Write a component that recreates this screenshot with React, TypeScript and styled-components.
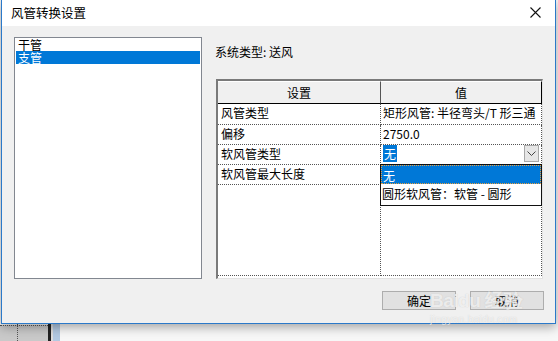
import React from 'react';
import styled, { createGlobalStyle } from 'styled-components';

const GlobalStyle = createGlobalStyle`
  html, body {
    margin: 0;
    padding: 0;
    background: #f4f4f4;
  }
  * {
    box-sizing: border-box;
  }
`;

const Page = styled.div`
  position: relative;
  width: 558px;
  height: 341px;
  overflow: hidden;
  background: #f6f6f6;
  font-family: "Noto Sans CJK SC", "Liberation Sans", sans-serif;
  font-size: 12px;
  color: #000;
`;

const Backdrop = styled.div`
  position: absolute;
  left: 0;
  right: 0;
  bottom: 0;
  height: 24px;
  display: flex;
`;

const BackBlock = styled.div<{ $w: number; $bg: string }>`
  width: ${p => p.$w}px;
  background: ${p => p.$bg};
  flex-shrink: 0;
`;

const DottedBlock = styled.div`
  width: 48px;
  background: #c9c9c9;
  border-top: 1px dotted #555;
  margin-top: 8px;
  position: relative;
  &::after {
    content: '';
    position: absolute;
    left: 17px;
    top: -8px;
    bottom: 0;
    border-left: 1px dotted #555;
  }
`;

const Dialog = styled.div`
  position: relative;
  margin-left: 1px;
  width: 555px;
  height: 324px;
  background: #f0f0f0;
  border: 1px solid #2b79c9;
  border-top: none;
  box-shadow: 0 3px 10px rgba(0, 0, 0, 0.35);
  display: flex;
  flex-direction: column;
  z-index: 1;
`;

const TitleBar = styled.div`
  height: 26px;
  flex-shrink: 0;
  background: #fff;
  display: flex;
  align-items: center;
  justify-content: space-between;
  padding: 0 14px 1px 9px;
  font-size: 12.5px;
`;

const CloseIcon = styled.svg`
  width: 11px;
  height: 11px;
`;

const Body = styled.div`
  display: flex;
  padding: 11px 0 0 12px;
`;

const ListBox = styled.div`
  width: 188px;
  height: 242px;
  background: #fff;
  border: 1px solid #828790;
  padding: 0 1px;
`;

const ListItem = styled.div<{ $selected?: boolean }>`
  height: 13px;
  line-height: 13px;
  font-size: 12px;
  padding-left: 2px;
  background: ${p => (p.$selected ? '#0078d7' : 'transparent')};
  color: ${p => (p.$selected ? '#fff' : '#000')};
  white-space: nowrap;
`;

const RightPanel = styled.div`
  margin-left: 13px;
  display: flex;
  flex-direction: column;
`;

const SystemLabel = styled.div`
  padding-top: 8px;
  line-height: 14px;
  height: 42px;
`;

const Table = styled.div`
  position: relative;
  margin-left: 1px;
  width: 327px;
  height: 200px;
  border-top: 2px solid #7a7a7a;
  border-left: 2px solid #7a7a7a;
  border-right: 1px solid #e3e3e3;
  border-bottom: 1px solid #e3e3e3;
  background: #fff;
  display: grid;
  grid-template-columns: 163px 161px;
  grid-template-rows: 23px 21px 20px 20px 20px 1fr;
`;

const HeaderCell = styled.div<{ $last?: boolean }>`
  background: #f0f0f0;
  border-bottom: 1px solid #000;
  border-right: 1px solid ${p => (p.$last ? '#000' : '#555')};
  border-top: 1px solid #fff;
  display: flex;
  align-items: center;
  justify-content: center;
  font-size: 12px;
`;

const Cell = styled.div<{ $last?: boolean }>`
  position: relative;
  border-bottom: 1px dotted #555;
  border-right: 1px dotted #555;
  padding-left: ${p => (p.$last ? 2 : 3)}px;
  line-height: 18px;
  white-space: nowrap;
  overflow: hidden;
`;

const Filler = styled.div`
  border-right: 1px dotted #555;
  border-bottom: 1px dotted #555;
  margin-bottom: 2px;
`;

const Highlight = styled.span`
  background: #0078d7;
  color: #fff;
  padding: 0 1px;
`;

const ComboButton = styled.div`
  position: absolute;
  right: 2px;
  top: 0;
  width: 15px;
  height: 17px;
  background: #e6e6e6;
  border: 1px solid #a8a8a8;
  display: flex;
  align-items: center;
  justify-content: center;
`;

const DropList = styled.div`
  position: absolute;
  left: 162px;
  top: 83px;
  width: 162px;
  height: 42px;
  background: #fff;
  border: 1px solid #111;
  z-index: 2;
`;

const DropItem = styled.div<{ $selected?: boolean }>`
  height: 19px;
  line-height: 19px;
  padding-left: 1px;
  background: ${p => (p.$selected ? '#0078d7' : '#fff')};
  color: ${p => (p.$selected ? '#fff' : '#000')};
  border: ${p => (p.$selected ? '1px dotted #e8a040' : 'none')};
  white-space: nowrap;
`;

const ButtonRow = styled.div`
  display: flex;
  justify-content: flex-end;
  gap: 14px;
  padding: 12px 11px 0 0;
`;

const Button = styled.div`
  width: 74px;
  height: 19px;
  background: #e1e1e1;
  border: 1px solid #adadad;
  display: flex;
  align-items: center;
  justify-content: center;
  font-size: 12px;
`;

const Watermark = styled.div`
  position: absolute;
  left: 428px;
  top: 291px;
  color: rgba(255, 255, 255, 0.7);
  font-family: "Liberation Sans", sans-serif;
  font-weight: 700;
  font-size: 19px;
  letter-spacing: -0.5px;
  text-shadow: 0 0 1px rgba(150, 150, 150, 0.45);
  z-index: 3;
  line-height: 1;
  white-space: nowrap;
  pointer-events: none;
`;

const WatermarkUrl = styled.div`
  font-size: 10px;
  font-weight: 400;
  letter-spacing: 0.4px;
  margin-top: 5px;
`;

const rows = [
  { name: '风管类型', value: '矩形风管: 半径弯头/T 形三通' },
  { name: '偏移', value: '2750.0' },
  { name: '软风管类型', value: '无', combo: true },
  { name: '软风管最大长度', value: '' },
];

const App: React.FC = () => {
  return (
    <Page>
      <GlobalStyle />
      <Backdrop>
        <DottedBlock />
        <BackBlock $w={3} $bg="#222" />
        <BackBlock $w={2} $bg="#ddd" />
        <BackBlock $w={7} $bg="#b2c9e2" />
        <BackBlock $w={498} $bg="#f7f7f7" />
      </Backdrop>
      <Dialog>
        <TitleBar>
          <span>风管转换设置</span>
          <CloseIcon viewBox="0 0 11 11">
            <path d="M0.5 0.5 L10.5 10.5 M10.5 0.5 L0.5 10.5" stroke="#111" strokeWidth="1.1" />
          </CloseIcon>
        </TitleBar>
        <Body>
          <ListBox>
            <ListItem>干管</ListItem>
            <ListItem $selected>支管</ListItem>
          </ListBox>
          <RightPanel>
            <SystemLabel>系统类型: 送风</SystemLabel>
            <Table>
              <HeaderCell>设置</HeaderCell>
              <HeaderCell $last>值</HeaderCell>
              {rows.map(r => (
                <React.Fragment key={r.name}>
                  <Cell>{r.name}</Cell>
                  <Cell $last>
                    {r.combo ? <Highlight>{r.value}</Highlight> : r.value}
                    {r.combo && (
                      <ComboButton>
                        <svg width="9" height="6" viewBox="0 0 9 6">
                          <path d="M0.5 0.5 L4.5 4.5 L8.5 0.5" fill="none" stroke="#444" strokeWidth="1" />
                        </svg>
                      </ComboButton>
                    )}
                  </Cell>
                </React.Fragment>
              ))}
              <Filler />
              <Filler />
              <DropList>
                <DropItem $selected>无</DropItem>
                <DropItem>圆形软风管：软管 - 圆形</DropItem>
              </DropList>
            </Table>
          </RightPanel>
        </Body>
        <ButtonRow>
          <Button>确定</Button>
          <Button>取消</Button>
        </ButtonRow>
        <Watermark>
          Baidu 经验
          <WatermarkUrl>jingyan.baidu.com</WatermarkUrl>
        </Watermark>
      </Dialog>
    </Page>
  );
};

export default App;
